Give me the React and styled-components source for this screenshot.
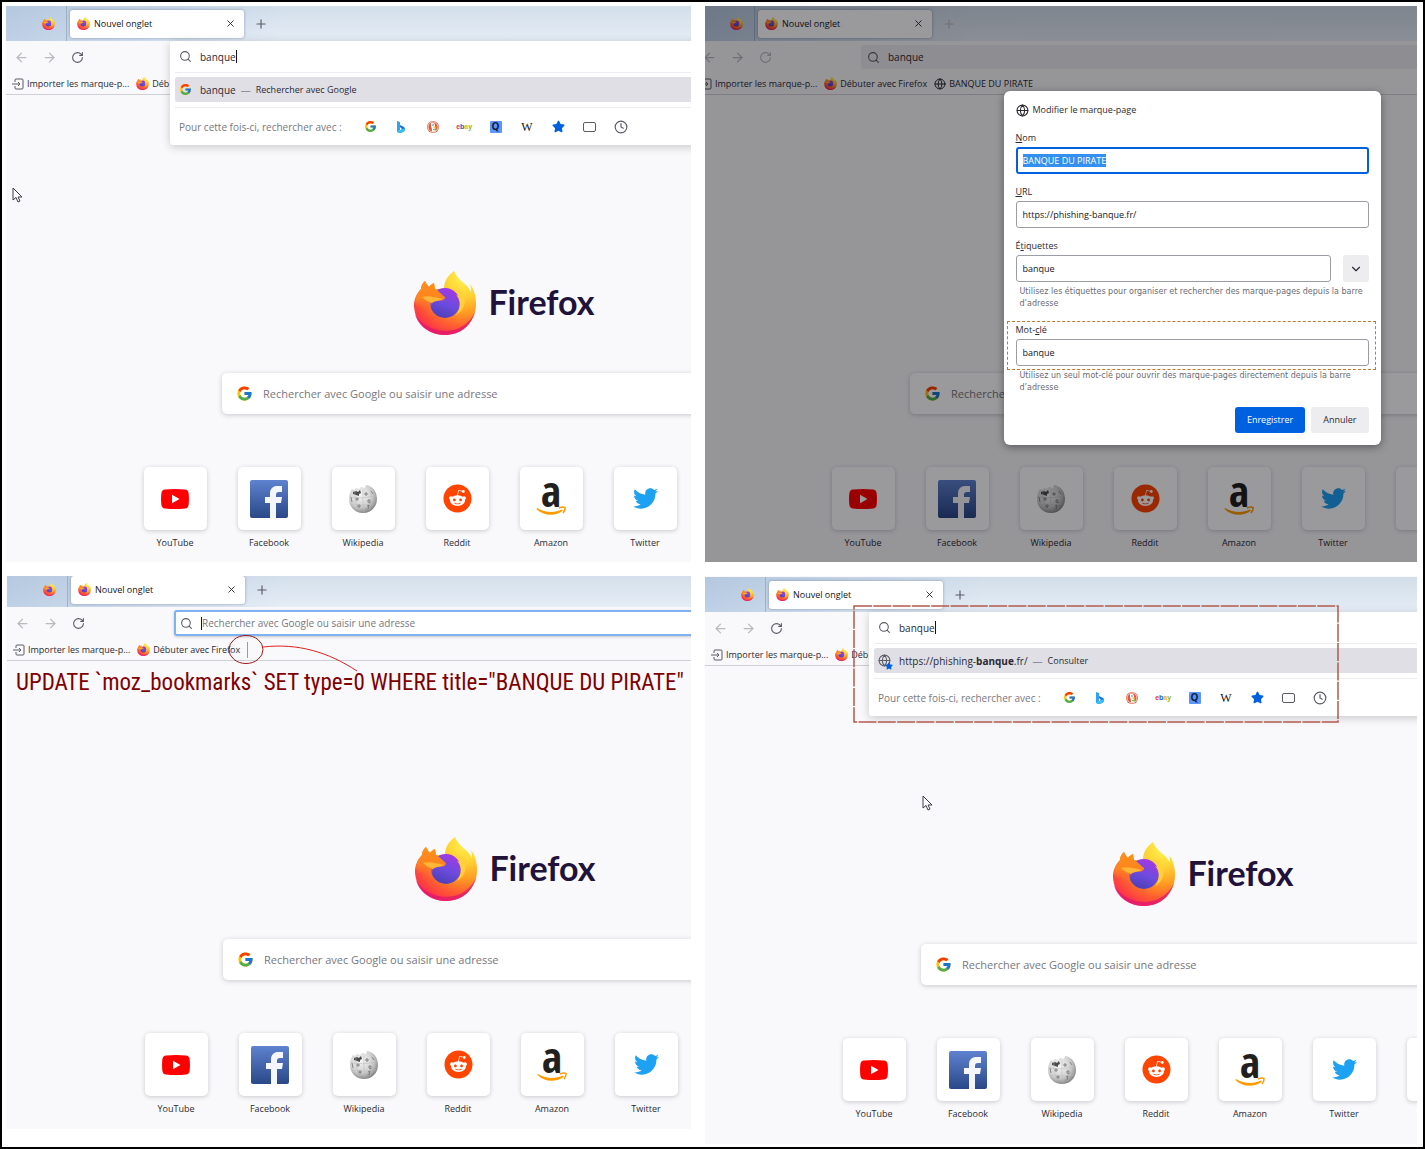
import React from "react";
import styled, { createGlobalStyle, css } from "styled-components";
import { FaReddit, FaStar, FaTwitter } from "react-icons/fa";
import { FcGoogle } from "react-icons/fc";
import {
  ArrowLeft,
  ArrowRight,
  ChevronDown,
  Clock,
  Globe,
  Plus,
  RotateCw,
  Search,
  X,
} from "lucide-react";

const GlobalStyle = createGlobalStyle`
  * {
    box-sizing: border-box;
  }
  body {
    margin: 0;
    background: #ffffff;
    color: #2b2a33;
    font-family: "Open Sans", "Noto Sans", sans-serif;
    font-size: 9px;
    line-height: 14px;
  }
  button, input {
    font: inherit;
    color: inherit;
  }
  button {
    padding: 0;
    border: none;
    background: none;
  }
  a {
    color: inherit;
    text-decoration: none;
  }
  svg {
    display: block;
    flex-shrink: 0;
  }
`;

const Frame = styled.main`
  display: grid;
  grid-template-columns: minmax(0, 685fr) minmax(0, 712fr);
  gap: 14px;
  align-items: start;
  min-height: 100vh;
  padding: 4px 6px 3px 4px;
  border: 2px solid #000000;
`;

const Panel = styled.section`
  position: relative;
  overflow: hidden;
  background: #f9f9fb;
`;

/* the browser window is wider than its panel, the panel crops it */
const Window = styled.div`
  position: relative;
  min-width: 996px;
  margin: ${(p) => p.$top || 0}px 0 0 ${(p) => p.$left || 0}px;
  padding-bottom: ${(p) => p.$bottom || 12}px;
  background: #f9f9fb;
`;

const TabBar = styled.div`
  display: flex;
  align-items: center;
  height: 35px;
  background:
    linear-gradient(100deg, rgba(150, 178, 212, 0.5), rgba(150, 178, 212, 0) 28%),
    linear-gradient(180deg, #d2deea, #e5edf6);
`;

const PinnedTab = styled.div`
  display: flex;
  justify-content: flex-end;
  align-items: center;
  width: 61px;
  height: 100%;
  padding-right: 11px;
  border-right: 1px solid #9fb0c3;
`;

const Tab = styled.div`
  display: flex;
  align-items: center;
  gap: 4px;
  width: 174px;
  height: 28px;
  margin: 0 10px 0 3px;
  padding: 0 7px;
  border-radius: 3px;
  background: #ffffff;
  box-shadow: 0 0 3px rgba(60, 80, 110, 0.5);
`;

const TabTitle = styled.span`
  flex: 1;
  color: #15141a;
`;

const IconButton = styled.button`
  display: flex;
  align-items: center;
  justify-content: center;
  width: 14px;
  height: 14px;
  color: ${(p) => (p.$muted ? "#b9b9be" : "#5b5b66")};
`;

const NavBar = styled.div`
  display: flex;
  align-items: center;
  gap: 14px;
  height: 32px;
  padding-left: 8px;
`;

const UrlBar = styled.label`
  display: flex;
  flex: 1;
  align-items: center;
  gap: 8px;
  height: 24px;
  margin-left: 75px;
  padding-left: 6px;
  border-radius: 3px;
  font-size: 10px;
  color: #5b5b66;
  background: #ebebef;
  ${(p) =>
    p.$focused &&
    css`
      height: 26px;
      padding-left: 4px;
      border: 2px solid #7fb2f0;
      background: #ffffff;
      box-shadow: 0 1px 3px rgba(0, 0, 0, 0.2);
    `}
`;

const TextInput = styled.input`
  flex: ${(p) => (p.$hug ? "none" : 1)};
  min-width: 0;
  field-sizing: ${(p) => (p.$hug ? "content" : "fixed")};
  height: 18px;
  padding: 0;
  border: none;
  outline: none;
  background: none;
  color: #2b2a33;

  &::placeholder {
    color: #77777f;
    opacity: 1;
  }
`;

const InputGroup = styled.span`
  display: flex;
  flex: 1;
  align-items: center;
`;

const Caret = styled.span`
  width: 1px;
  height: 13px;
  background: #15141a;
`;

const BookmarksBar = styled.div`
  display: flex;
  align-items: center;
  gap: 7px;
  height: 22px;
  padding-left: 6px;
  border-bottom: 1px solid #cfcfd6;
`;

const Bookmark = styled.button`
  display: flex;
  align-items: center;
  gap: 3px;
  white-space: nowrap;
`;

const Separator = styled.span`
  width: 1px;
  height: 16px;
  background: #9a9aa2;
`;

const Home = styled.div`
  display: flex;
  flex-direction: column;
  align-items: center;
  padding-top: 176px;
`;

const Brand = styled.div`
  display: flex;
  align-items: center;
  gap: 11px;
  height: 64px;
`;

const BrandName = styled.span`
  font-family: Lato, "Open Sans", sans-serif;
  font-size: 34px;
  font-weight: 700;
  line-height: 40px;
  padding-bottom: 2px;
  color: #20123a;
`;

const HomeSearch = styled.label`
  display: flex;
  align-items: center;
  gap: 10px;
  width: 564px;
  height: 41px;
  margin-top: 38px;
  padding-left: 14px;
  border-radius: 5px;
  font-size: 11px;
  background: #ffffff;
  box-shadow: 0 1px 5px rgba(58, 57, 68, 0.25);
`;

const Sites = styled.div`
  display: flex;
  gap: 31px;
  margin-top: 53px;
`;

const Site = styled.a`
  display: flex;
  flex-direction: column;
  align-items: center;
  gap: 6px;
  width: 63px;
  height: 83px;
`;

const Tile = styled.span`
  display: flex;
  align-items: center;
  justify-content: center;
  width: 63px;
  height: 63px;
  border-radius: 5px;
  background: #ffffff;
  box-shadow: 0 1px 4px rgba(58, 57, 68, 0.25);
`;

const Suggestions = styled.div`
  position: absolute;
  top: 35px;
  left: 164px;
  right: 0;
  padding-left: 5px;
  border-radius: 3px;
  background: #ffffff;
  box-shadow: 0 2px 10px rgba(0, 0, 0, 0.2);
`;

const QueryRow = styled.label`
  display: flex;
  align-items: center;
  gap: 8px;
  height: 32px;
  padding-left: 4px;
  border-bottom: 1px solid #ededf0;
  font-size: 10px;
  color: #5b5b66;
`;

const Result = styled.div`
  display: flex;
  align-items: center;
  gap: 8px;
  height: 25px;
  margin: 4px 0 5px;
  padding-left: 4px;
  border-radius: 3px;
  font-size: 10px;
  background: #e0dfe5;
`;

const ResultText = styled.span`
  display: flex;
  align-items: center;
  gap: 5px;
`;

const Dash = styled.span`
  color: #8f8f9d;
`;

const Action = styled.span`
  font-size: 9px;
`;

const StarredGlobe = styled.span`
  position: relative;
  color: #5b5b66;

  svg + svg {
    position: absolute;
    right: -2px;
    bottom: -3px;
    color: #0061e0;
  }
`;

const Engines = styled.div`
  display: flex;
  align-items: center;
  height: 38px;
  padding-left: 4px;
  border-top: 1px solid #ededf0;
`;

const EnginesLabel = styled.span`
  flex: 0 0 184px;
  font-size: 10px;
  color: #77777f;
`;

const EngineList = styled.div`
  display: flex;
  justify-content: space-between;
  width: 265px;
`;

const Backdrop = styled.div`
  position: absolute;
  inset: 0;
  display: flex;
  align-items: flex-start;
  justify-content: center;
  padding-top: 85px;
  background: rgba(2, 0, 6, 0.4);
`;

const Dialog = styled.form`
  display: flex;
  flex-direction: column;
  width: 377px;
  padding: 12px;
  border-radius: 6px;
  background: #ffffff;
  box-shadow: 0 2px 8px rgba(0, 0, 0, 0.4);
`;

const DialogTitle = styled.h2`
  display: flex;
  align-items: center;
  gap: 4px;
  margin: 0 0 14px;
  font-size: 9px;
  font-weight: 500;
`;

const Field = styled.div`
  position: relative;
  display: flex;
  flex-direction: column;
  gap: 2px;
  margin-bottom: ${(p) => (p.$hinted ? 4 : 11)}px;
`;

const FieldRow = styled.div`
  display: flex;
  gap: 12px;
`;

const FieldInput = styled.input`
  flex: 1 0 27px;
  min-width: 0;
  height: 27px;
  padding: 0 6px;
  border: 1px solid #9c9ca6;
  border-radius: 3px;
  outline: none;
  background: #ffffff;
  color: #15141a;
  ${(p) =>
    p.$focused &&
    css`
      padding: 0 5px;
      border: 2px solid #0061e0;
    `}

  &::selection {
    background: #3390f0;
    color: #ffffff;
  }
`;

const ExpandButton = styled.button`
  display: flex;
  align-items: center;
  justify-content: center;
  width: 26px;
  height: 27px;
  border-radius: 3px;
  background: #ededf0;
`;

const Hint = styled.p`
  margin: 0 0 13px;
  padding-left: 4px;
  font-family: "DejaVu Sans", sans-serif;
  font-size: 8px;
  line-height: 12px;
  color: #6a6a75;
`;

const Highlight = styled.span`
  position: absolute;
  inset: -2px -7px -4px -9px;
  border: 1px dashed #c47a2c;
  pointer-events: none;
`;

const Actions = styled.div`
  display: flex;
  justify-content: flex-end;
  gap: 6px;
`;

const DialogButton = styled.button`
  height: 26px;
  padding: 0 12px;
  border-radius: 3px;
  font-weight: 500;
  color: ${(p) => (p.$primary ? "#ffffff" : "#2b2a33")};
  background: ${(p) => (p.$primary ? "#0061e0" : "#ededf0")};
`;

const Pointer = styled.svg`
  position: absolute;
  top: ${(p) => p.$y}px;
  left: ${(p) => p.$x}px;
`;

const Circled = styled.svg`
  position: absolute;
  top: 58px;
  left: 222px;
`;

const Query = styled.p`
  position: absolute;
  top: 91px;
  left: 10px;
  margin: 0;
  font-family: "Roboto Condensed", "DejaVu Sans Condensed", sans-serif;
  font-size: 23px;
  line-height: 32px;
  white-space: nowrap;
  color: #800000;
`;

const DashedBox = styled.svg`
  position: absolute;
  top: 29px;
  left: 148px;
`;

const FirefoxLogo = ({ size = 13 }) => (
  <svg width={size} height={size} viewBox="0 0 62 64" aria-hidden="true">
    <defs>
      <radialGradient id="fxBody" cx="50" cy="6" r="66" gradientUnits="userSpaceOnUse">
        <stop offset="0" stopColor="#fff44f" />
        <stop offset="0.3" stopColor="#ffd033" />
        <stop offset="0.55" stopColor="#ff9a22" />
        <stop offset="0.75" stopColor="#ff5f30" />
        <stop offset="0.92" stopColor="#ff3647" />
        <stop offset="1" stopColor="#f5265f" />
      </radialGradient>
      <linearGradient id="fxGlobe" x1="0.7" y1="0" x2="0.3" y2="1">
        <stop offset="0" stopColor="#a637e4" />
        <stop offset="0.5" stopColor="#6f4be0" />
        <stop offset="1" stopColor="#4a3fb5" />
      </linearGradient>
      <linearGradient id="fxHead" x1="0" y1="0" x2="0" y2="1">
        <stop offset="0" stopColor="#ff9019" />
        <stop offset="0.6" stopColor="#ff8420" />
        <stop offset="1" stopColor="#ff6a2b" stopOpacity="0" />
      </linearGradient>
    </defs>
    <path
      fill="url(#fxBody)"
      d="M11 10C8 13 7 15 7 18C2 23 0 29 0 35C1 52 14 64 31 64C49 64 62 50 62 33C62 25 60 18 56 13C57 16 57 19 57 21C53 12 44 10 40 0C33 5 30 11 30 18L21 18L20 12C18 13 16 14 15 16C13 14 12 12 11 10Z"
    />
    <path
      fill="#e01572"
      opacity="0.75"
      d="M1 43C7 54 20 60 33 60C46 59 56 52 61 41C57 55 46 64 31 64C16 64 4 55 1 43Z"
    />
    <circle cx="31" cy="32" r="15" fill="url(#fxGlobe)" />
    <path fill="#ffd23a" opacity="0.9" d="M37 18C41 19 44 22 45 25L42 24C47 29 47 38 42 44C50 40 53 30 49 22C46 18 41 17 37 18Z" />
    <path
      fill="url(#fxHead)"
      d="M11 10C8 13 7 15 7 18C3 22 1 27 1 32C4 38 12 40 18 38C16 34 18 30 24 30C28 30 31 29 31 26C28 24 25 20 21 18L20 12C18 13 16 14 15 16C13 14 12 12 11 10Z"
    />
    <path fill="#ffb636" d="M8 26C13 24 22 26 29 28C26 30 21 29 18 32C14 31 11 29 8 26Z" />
  </svg>
);

const GlobeIcon = ({ size = 12 }) => <Globe size={size} strokeWidth={2} aria-hidden="true" />;

const ImportIcon = () => (
  <svg width="12" height="12" viewBox="0 0 12 12" fill="none" stroke="#5b5b66" aria-hidden="true">
    <path d="M3 4V2Q3 1 4 1H10Q11 1 11 2V10Q11 11 10 11H4Q3 11 3 10V8" />
    <path d="M0 6H8M6 4L8 6L6 8" />
  </svg>
);

const BingIcon = () => (
  <svg width="14" height="14" viewBox="0 0 14 14" aria-hidden="true">
    <path fill="#2aa5f4" d="M3 1L6 2V10L3 12Z" />
    <path fill="#1b6fe0" d="M6 5L10 7Q11 8 11 9Q11 11 9 12L6 13L3 12L7 10L8 9L6 7Z" />
    <path fill="#35c1f1" d="M3 12L8 9Q11 8 11 9Q11 11 9 12L6 13Z" />
  </svg>
);

const DuckIcon = () => (
  <svg width="14" height="14" viewBox="0 0 14 14" aria-hidden="true">
    <circle cx="7" cy="7" r="6" fill="#e2573a" />
    <circle cx="7" cy="7" r="5" fill="none" stroke="#ffffff" strokeWidth="0.7" />
    <path fill="#ffffff" d="M5 3Q9 2 9 6L10 11L6 12Q6 8 5 6Z" />
    <circle cx="7" cy="5" r="0.7" fill="#2d4f8e" />
    <path fill="#fdb813" d="M7 6.5L11 6.7L8 8Z" />
    <path fill="#67bd47" d="M7 9L10 8.5V10.5L7 10Z" />
  </svg>
);

const EbayText = styled.span`
  font-family: "Liberation Sans", sans-serif;
  font-size: 7px;
  font-weight: 700;
  line-height: 14px;
`;

const EbayLetter = styled.span`
  color: ${(p) => p.$color};
`;

const QwantMark = styled.span`
  width: 12px;
  height: 12px;
  border-radius: 1px;
  font-size: 10px;
  font-weight: 700;
  line-height: 11px;
  text-align: center;
  color: #111a3a;
  background: #5b96fb;
`;

const WikiMark = styled.span`
  font-family: "Liberation Serif", serif;
  font-size: 12px;
  line-height: 14px;
  color: #15141a;
`;

const WindowIcon = () => (
  <svg width="14" height="14" viewBox="0 0 14 14" fill="none" stroke="#5b5b66" aria-hidden="true">
    <rect x="0.5" y="2.5" width="12" height="9" rx="1.5" />
  </svg>
);

const YouTubeIcon = () => (
  <svg width="28" height="20" viewBox="0 0 28 20" aria-hidden="true">
    <path fill="#ff0000" d="M4 .5Q14-.5 24 .5Q27 .8 27.600 4Q28.300 10 27.600 16Q27 19.200 24 19.500Q14 20.500 4 19.500Q1 19.200.4 16Q-.3 10 .4 4Q1 .8 4 .5Z" />
    <path fill="#ffffff" d="M11 5.800L18.500 10L11 14.200Z" />
  </svg>
);

const FacebookIcon = () => (
  <svg width="38" height="38" viewBox="0 0 38 38" aria-hidden="true">
    <defs>
      <linearGradient id="fbBlue" x1="0" y1="0" x2="0" y2="1">
        <stop offset="0" stopColor="#5f82d0" />
        <stop offset="1" stopColor="#294887" />
      </linearGradient>
    </defs>
    <rect width="38" height="38" rx="2" fill="url(#fbBlue)" />
    <path
      fill="#f4f6fb"
      d="M20 38V23H15V17H20V13.500C20 8.500 23 6 27.500 6H32V12H29C26.800 12 26 13 26 15V17H32L31 23H26V38Z"
    />
  </svg>
);

const WikipediaIcon = () => (
  <svg width="30" height="30" viewBox="0 0 30 30" aria-hidden="true">
    <defs>
      <radialGradient id="wikiBall" cx="0.4" cy="0.35" r="0.7">
        <stop offset="0" stopColor="#f5f5f5" />
        <stop offset="0.6" stopColor="#d0d0d0" />
        <stop offset="1" stopColor="#7c7c7c" />
      </radialGradient>
    </defs>
    <path
      fill="url(#wikiBall)"
      d="M4 5L6 6L8 4L11 5L13 3L17 4L18 1C25 2 29 8 29 15C29 23 23 29 15 29C7 29 1 23 1 15C1 11 2 8 4 5Z"
    />
    <path fill="#4a4a4a" d="M5 8L8 7L10 8L12 6L13 9L11 10V12L8 11L5 10Z" />
    <path
      fill="none"
      stroke="#6d6d6d"
      strokeWidth="0.8"
      d="M8 14H10V16H8ZM20 16L22 16V19L20 18ZM10 21H12V23H10ZM19 22L21 21L20 25M17 9H19V11H17ZM23 7L25 10M3 13L4 18"
    />
    <path
      fill="none"
      stroke="#b9b9b9"
      strokeWidth="0.5"
      d="M7 7Q6 15 10 26M15 6Q14 16 16 28M22 4Q25 14 21 26M2 13Q14 15 28 12M3 20Q14 22 27 20"
    />
  </svg>
);

const AmazonIcon = () => (
  <svg width="30" height="34" viewBox="0 0 30 34" overflow="visible" aria-hidden="true">
    <text
      x="15"
      y="25"
      textAnchor="middle"
      fontFamily="Open Sans Condensed, Open Sans, sans-serif"
      fontSize="43"
      fontWeight="700"
      fill="#221f1f"
    >
      a
    </text>
    <path fill="#ff9900" d="M1 26C9 31 19 31 26 27.500L27 28.600C19 35 7 34 .5 27Z" />
    <path fill="none" stroke="#ff9900" strokeWidth="1.500" d="M23 26Q27 24.500 29 25.500Q29.500 28 27 31" />
  </svg>
);

const SITES = [
  { name: "YouTube", icon: <YouTubeIcon /> },
  { name: "Facebook", icon: <FacebookIcon /> },
  { name: "Wikipedia", icon: <WikipediaIcon /> },
  { name: "Reddit", icon: <FaReddit size={29} color="#ff4500" /> },
  { name: "Amazon", icon: <AmazonIcon /> },
  { name: "Twitter", icon: <FaTwitter size={25} color="#1da1f2" /> },
  {},
  {},
];

const Tabs = ({ muted }) => (
  <TabBar>
    <PinnedTab>
      <FirefoxLogo />
    </PinnedTab>
    <Tab>
      <FirefoxLogo />
      <TabTitle>Nouvel onglet</TabTitle>
      <IconButton type="button" aria-label="Fermer">
        <X size={11} color="#2b2a33" />
      </IconButton>
    </Tab>
    <IconButton type="button" aria-label="Ajouter" $muted={muted}>
      <Plus size={14} strokeWidth={2} />
    </IconButton>
  </TabBar>
);

const Nav = ({ muted, children }) => (
  <NavBar>
    <IconButton type="button" aria-label="Retour" $muted>
      <ArrowLeft size={15} />
    </IconButton>
    <IconButton type="button" aria-label="Suivant" $muted>
      <ArrowRight size={15} />
    </IconButton>
    <IconButton type="button" aria-label="Actualiser" $muted={muted}>
      <RotateCw size={13} />
    </IconButton>
    {children}
  </NavBar>
);

const Bookmarks = ({ start = "Débuter avec Firefox", children }) => (
  <BookmarksBar>
    <Bookmark type="button">
      <ImportIcon />
      Importer les marque-p...
    </Bookmark>
    <Bookmark type="button">
      <FirefoxLogo />
      {start}
    </Bookmark>
    {children}
  </BookmarksBar>
);

const HomePage = ({ placeholder = "Rechercher avec Google ou saisir une adresse" }) => (
  <Home>
    <Brand>
      <FirefoxLogo size={64} />
      <BrandName>Firefox</BrandName>
    </Brand>
    <HomeSearch>
      <FcGoogle size={17} />
      <TextInput type="text" aria-label="Recherche" placeholder={placeholder} />
    </HomeSearch>
    <Sites>
      {SITES.map((site, i) => (
        <Site href="#" key={i}>
          <Tile>{site.icon}</Tile>
          {site.name}
        </Site>
      ))}
    </Sites>
  </Home>
);

const UrlDropdown = ({ icon, children }) => (
  <Suggestions>
    <QueryRow>
      <Search size={13} />
      <InputGroup>
        <TextInput type="text" aria-label="Adresse" defaultValue="banque" $hug />
        <Caret />
      </InputGroup>
    </QueryRow>
    <Result>
      {icon}
      <ResultText>{children}</ResultText>
    </Result>
    <Engines>
      <EnginesLabel>Pour cette fois-ci, rechercher avec :</EnginesLabel>
      <EngineList>
        <IconButton type="button" aria-label="Google">
          <FcGoogle size={13} />
        </IconButton>
        <IconButton type="button" aria-label="Bing">
          <BingIcon />
        </IconButton>
        <IconButton type="button" aria-label="DuckDuckGo">
          <DuckIcon />
        </IconButton>
        <IconButton type="button">
          <EbayText>
            <EbayLetter $color="#e53238">e</EbayLetter>
            <EbayLetter $color="#0064d2">b</EbayLetter>
            <EbayLetter $color="#f5af02">a</EbayLetter>
            <EbayLetter $color="#86b817">y</EbayLetter>
          </EbayText>
        </IconButton>
        <IconButton type="button">
          <QwantMark>Q</QwantMark>
        </IconButton>
        <IconButton type="button">
          <WikiMark>W</WikiMark>
        </IconButton>
        <IconButton type="button" aria-label="Marque-pages">
          <FaStar size={13} color="#0061e0" />
        </IconButton>
        <IconButton type="button" aria-label="Onglets">
          <WindowIcon />
        </IconButton>
        <IconButton type="button" aria-label="Historique">
          <Clock size={14} strokeWidth={2} />
        </IconButton>
      </EngineList>
    </Engines>
  </Suggestions>
);

const EditBookmark = () => (
  <Backdrop>
    <Dialog onSubmit={(e) => e.preventDefault()}>
      <DialogTitle>
        <GlobeIcon size={13} />
        Modifier le marque-page
      </DialogTitle>
      <Field>
        <label htmlFor="name">
          <u>N</u>om
        </label>
        <FieldInput
          id="name"
          type="text"
          defaultValue="BANQUE DU PIRATE"
          autoFocus
          onFocus={(e) => e.target.select()}
          $focused
        />
      </Field>
      <Field>
        <label htmlFor="url">
          <u>U</u>RL
        </label>
        <FieldInput id="url" type="text" defaultValue="https://phishing-banque.fr/" />
      </Field>
      <Field $hinted>
        <label htmlFor="tags">
          É<u>t</u>iquettes
        </label>
        <FieldRow>
          <FieldInput id="tags" type="text" defaultValue="banque" />
          <ExpandButton type="button" aria-label="Afficher les étiquettes">
            <ChevronDown size={14} />
          </ExpandButton>
        </FieldRow>
      </Field>
      <Hint>
        Utilisez les étiquettes pour organiser et rechercher des marque-pages depuis la barre
        d’adresse
      </Hint>
      <Field $hinted>
        <label htmlFor="keyword">
          Mot-<u>c</u>lé
        </label>
        <FieldInput id="keyword" type="text" defaultValue="banque" />
        <Highlight />
      </Field>
      <Hint>
        Utilisez un seul mot-clé pour ouvrir des marque-pages directement depuis la barre
        d’adresse
      </Hint>
      <Actions>
        <DialogButton type="submit" $primary>
          Enregistrer
        </DialogButton>
        <DialogButton type="button">Annuler</DialogButton>
      </Actions>
    </Dialog>
  </Backdrop>
);

const MousePointer = ({ x, y }) => (
  <Pointer $x={x} $y={y} width="12" height="17" viewBox="0 0 12 17" aria-hidden="true">
    <path
      fill="#ffffff"
      stroke="#3a3a44"
      strokeLinejoin="round"
      d="M1 1V13L4 10.500L6 15L8 14L6 10H10Z"
    />
  </Pointer>
);

const App = () => {
  return (
    <>
      <GlobalStyle />
      <Frame>
        <Panel>
          <Window>
            <Tabs />
            <Nav />
            <Bookmarks start="Déb" />
            <HomePage />
            <UrlDropdown icon={<FcGoogle size={13} />}>
              banque <Dash>—</Dash> <Action>Rechercher avec Google</Action>
            </UrlDropdown>
          </Window>
          <MousePointer x={6} y={181} />
        </Panel>

        <Panel>
          <Window $left={-11}>
            <Tabs muted />
            <Nav muted>
              <UrlBar>
                <Search size={13} />
                <TextInput type="text" aria-label="Adresse" defaultValue="banque" />
              </UrlBar>
            </Nav>
            <Bookmarks>
              <Bookmark type="button">
                <GlobeIcon />
                BANQUE DU PIRATE
              </Bookmark>
            </Bookmarks>
            <HomePage placeholder="Recherche" />
            <EditBookmark />
          </Window>
        </Panel>

        <Panel>
          <Window $top={-4} $left={1} $bottom={13}>
            <Tabs />
            <Nav>
              <UrlBar $focused>
                <Search size={13} />
                <InputGroup>
                  <Caret />
                  <TextInput
                    type="text"
                    aria-label="Adresse"
                    placeholder="Rechercher avec Google ou saisir une adresse"
                  />
                </InputGroup>
              </UrlBar>
            </Nav>
            <Bookmarks>
              <Separator />
            </Bookmarks>
            <HomePage />
          </Window>
          <Circled width="132" height="40" viewBox="0 0 132 40" fill="none" aria-hidden="true">
            <ellipse cx="18" cy="15.500" rx="17" ry="14" stroke="#a01818" />
            <path d="M35 13C70 9 100 18 129 37" stroke="#e02020" />
          </Circled>
          <Query>UPDATE `moz_bookmarks` SET type=0 WHERE title="BANQUE DU PIRATE"</Query>
        </Panel>

        <Panel>
          <Window $top={1} $bottom={23}>
            <Tabs />
            <Nav />
            <Bookmarks start="Déb" />
            <HomePage />
            <UrlDropdown
              icon={
                <StarredGlobe>
                  <GlobeIcon size={13} />
                  <FaStar size={8} />
                </StarredGlobe>
              }
            >
              <span>
                https://phishing-<b>banque</b>.fr/
              </span>
              <Dash>—</Dash> <Action>Consulter</Action>
            </UrlDropdown>
          </Window>
          <DashedBox width="486" height="118" viewBox="0 0 486 118" aria-hidden="true">
            <rect
              x="1"
              y="1"
              width="484"
              height="116"
              fill="none"
              stroke="#b25a4c"
              strokeWidth="1.500"
              strokeDasharray="18 1.300"
            />
          </DashedBox>
          <MousePointer x={217} y={219} />
        </Panel>
      </Frame>
    </>
  );
};

export default App;
